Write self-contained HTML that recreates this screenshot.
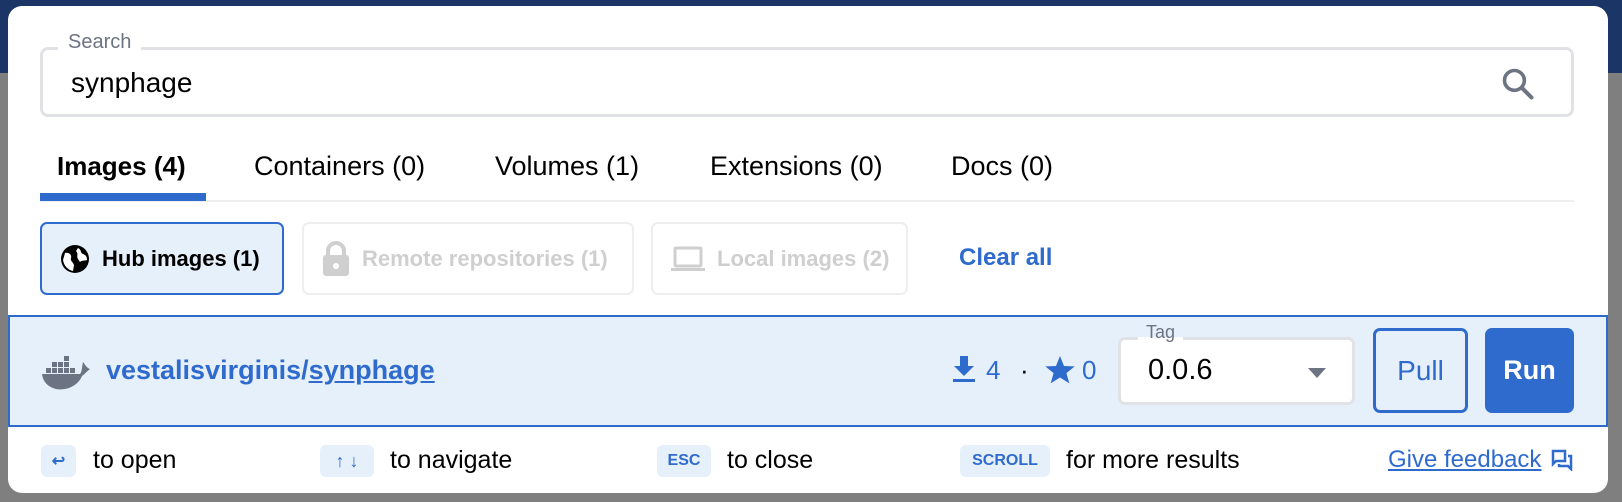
<!DOCTYPE html>
<html><head><meta charset="utf-8"><style>
*{box-sizing:border-box;margin:0;padding:0}
body{width:1622px;height:502px;position:relative;overflow:hidden;background:#7f7f7f;font-family:"Liberation Sans",sans-serif;}
.band{position:absolute;left:0;top:0;width:1622px;height:73px;background:#1b3566}
.modal{position:absolute;left:8px;top:6px;width:1600px;height:487px;background:#fff;border-radius:14px;overflow:hidden}
.a{position:absolute;white-space:nowrap}
.field{position:absolute;left:32px;top:41px;width:1534px;height:70px;border:3px solid #e1e2e6;border-radius:8px}
.tab{position:absolute;top:144px;font-size:27px;color:#000;line-height:32px}
.chip{position:absolute;top:216px;height:73px;border:2px solid #eee;border-radius:7px;font-size:22px;font-weight:bold;color:#cfcfcf;display:flex;align-items:center;padding-left:18px;gap:12px}
.kbd{position:absolute;top:439px;height:32px;background:#e6f0fa;border-radius:6px;color:#2f6bcd;font-size:16px;font-weight:bold;display:flex;align-items:center;justify-content:center}
.ft{position:absolute;top:439px;font-size:25px;line-height:30px;color:#000}
</style></head><body>
<div class="band"></div>
<div class="modal">
 <div class="field"></div>
 <div class="a" style="left:50px;top:24px;background:#fff;padding:0 10px;font-size:20px;line-height:24px;color:#6c7383">Search</div>
 <div class="a" style="left:63px;top:61px;font-size:28px;line-height:32px;color:#000">synphage</div>
 <svg class="a" style="left:1492px;top:60px" width="36" height="36" viewBox="0 0 40 40"><circle cx="16" cy="16" r="11" fill="none" stroke="#6c7383" stroke-width="4"/><path d="M24 24 L35 35" stroke="#6c7383" stroke-width="4.5" stroke-linecap="round"/></svg>
 <div class="tab" style="left:49px;font-weight:bold;font-size:26px">Images (4)</div>
 <div class="tab" style="left:246px">Containers (0)</div>
 <div class="tab" style="left:487px">Volumes (1)</div>
 <div class="tab" style="left:702px">Extensions (0)</div>
 <div class="tab" style="left:943px">Docs (0)</div>
 <div class="a" style="left:32px;top:194px;width:1534px;height:2px;background:#eeeff1"></div>
 <div class="a" style="left:32px;top:187px;width:166px;height:8px;background:#2f6bcd"></div>
 <div class="chip" style="left:32px;width:244px;border-color:#2f6bcd;background:#e6f0fa;color:#000">
  <svg width="30" height="30" viewBox="0 0 30 30"><circle cx="15" cy="15" r="14" fill="#000"/><path d="M5 9 C9 8 12 11 11 14 C10 17 13 18 14 21 L13 27 C8 26 4 22 3 16 Z M18 4 C22 6 20 9 23 10 C26 11 27 13 27 16 C25 17 22 16 20 18 L18 15 C16 12 19 10 16 7 Z" fill="#fff"/></svg>Hub images (1)</div>
 <div class="chip" style="left:294px;width:332px">
  <svg width="28" height="36" viewBox="0 0 28 36"><path d="M6 15 V10 A8 8 0 0 1 22 10 V15" fill="none" stroke="#cfcfcf" stroke-width="4"/><rect x="1" y="14" width="26" height="21" rx="3" fill="#cfcfcf"/><circle cx="14" cy="25" r="3" fill="#fff"/></svg>Remote repositories (1)</div>
 <div class="chip" style="left:643px;width:257px">
  <svg width="34" height="28" viewBox="0 0 34 28"><rect x="4" y="3" width="26" height="18" rx="1" fill="none" stroke="#cfcfcf" stroke-width="3"/><rect x="0" y="23" width="34" height="3" fill="#cfcfcf"/></svg>Local images (2)</div>
 <div class="a" style="left:951px;top:237px;font-size:24px;line-height:30px;font-weight:bold;color:#2f6bcd">Clear all</div>
 <div class="a" style="left:0;top:309px;width:1600px;height:112px;background:#e6f0fa;border:2px solid #2f6bcd"></div>
 <svg class="a" style="left:34px;top:348px" width="50" height="36" viewBox="0 0 50 36"><g fill="#6c7383"><rect x="10" y="8" width="5" height="5"/><rect x="16" y="8" width="5" height="5"/><rect x="22" y="8" width="5" height="5"/><rect x="22" y="2" width="5" height="5"/><rect x="4" y="14" width="5" height="5"/><rect x="10" y="14" width="5" height="5"/><rect x="16" y="14" width="5" height="5"/><rect x="22" y="14" width="5" height="5"/><rect x="28" y="14" width="5" height="5"/><path d="M0 20 H38 C40 18 40 12 41 8 C44 12 45 14 48 15 C44 18 43 20 40 22 C36 32 24 37 14 35 C6 33 1 28 0 20Z"/></g></svg>
 <div class="a" style="left:98px;top:348px;font-size:27px;line-height:32px;font-weight:bold;color:#2f6bcd">vestalisvirginis/<span style="text-decoration:underline">synphage</span></div>
 <svg class="a" style="left:944px;top:348px" width="24" height="30" viewBox="0 0 24 30"><path d="M8 2 H16 V12 H22 L12 22 L2 12 H8 Z" fill="#2f6bcd"/><rect x="1" y="25" width="22" height="3" fill="#2f6bcd"/></svg>
 <div class="a" style="left:978px;top:348px;font-size:26px;line-height:32px;color:#2f6bcd">4</div>
 <div class="a" style="left:1012px;top:348px;font-size:26px;line-height:32px;color:#000">·</div>
 <svg class="a" style="left:1036px;top:348px" width="32" height="32" viewBox="0 0 24 24"><path d="M12 1.5 L15 9 L23 9.3 L16.8 14.3 L19 22 L12 17.6 L5 22 L7.2 14.3 L1 9.3 L9 9 Z" fill="#2f6bcd"/></svg>
 <div class="a" style="left:1074px;top:348px;font-size:26px;line-height:32px;color:#2f6bcd">0</div>
 <div class="a" style="left:1110px;top:331px;width:237px;height:68px;background:#fff;border:3px solid #e1e2e6;border-radius:7px"></div>
 <div class="a" style="left:1130px;top:316px;padding:0 8px;font-size:18px;color:#6c7383;line-height:20px;background:linear-gradient(#e6f0fa 75%,#fff 75%)">Tag</div>
 <div class="a" style="left:1140px;top:348px;font-size:29px;line-height:32px;color:#000">0.0.6</div>
 <div class="a" style="left:1300px;top:362px;width:0;height:0;border-left:9px solid transparent;border-right:9px solid transparent;border-top:10px solid #6c7383"></div>
 <div class="a" style="left:1365px;top:322px;width:95px;height:85px;border:3px solid #2f6bcd;border-radius:7px;font-size:28px;color:#2f6bcd;display:flex;align-items:center;justify-content:center">Pull</div>
 <div class="a" style="left:1477px;top:322px;width:89px;height:85px;background:#2f6bcd;border-radius:7px;font-size:27px;color:#fff;font-weight:bold;display:flex;align-items:center;justify-content:center">Run</div>
 <div class="kbd" style="left:33px;width:35px;font-size:16px">↩</div>
 <div class="ft" style="left:85px">to open</div>
 <div class="kbd" style="left:312px;width:54px;font-size:18px">↑ ↓</div>
 <div class="ft" style="left:382px">to navigate</div>
 <div class="kbd" style="left:649px;width:54px">ESC</div>
 <div class="ft" style="left:719px">to close</div>
 <div class="kbd" style="left:952px;width:90px">SCROLL</div>
 <div class="ft" style="left:1058px">for more results</div>
 <div class="ft" style="left:1380px;color:#2f6bcd;text-decoration:underline;font-size:24px">Give feedback</div>
 <svg class="a" style="left:1543px;top:443px" width="22" height="22" viewBox="0 0 22 22"><path d="M2 2 H14 V12 H5 L2 15 Z" fill="none" stroke="#2f6bcd" stroke-width="2.5"/><path d="M17 7 H20 V20 L17 17 H8 V15" fill="none" stroke="#2f6bcd" stroke-width="2.5"/></svg>
</div>
</body></html>
